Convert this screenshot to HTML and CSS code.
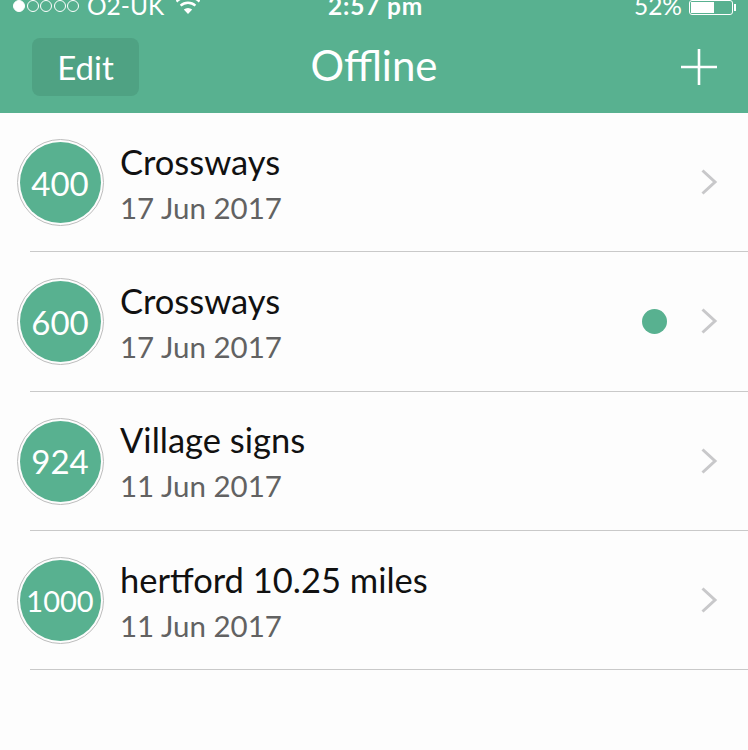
FILE: index.html
```html
<!DOCTYPE html>
<html lang="en">
  <head>
    <meta charset="UTF-8" />
    <meta name="viewport" content="width=device-width, initial-scale=1.0" />
    <title>Offline</title>
    <link rel="stylesheet" href="styles.css">
  </head>
  <body>
    <header class="header">
      <div class="status-bar">
        <div class="status-left">
          <span class="signal">
            <i class="on"></i><i></i><i></i><i></i><i></i>
          </span>
          <span class="carrier">O2-UK</span>
          <svg class="wifi" width="24" height="14" viewBox="0 0 24 14">
            <path d="M0.5 1.5 A17 17 0 0 1 23.5 1.5" fill="none" stroke="#fff" stroke-width="2.4" />
            <path d="M4.6 5.6 A11 11 0 0 1 19.4 5.6" fill="none" stroke="#fff" stroke-width="2.4" />
            <path d="M12 14 L7.8 9.6 A6.2 6.2 0 0 1 16.2 9.6 Z" fill="#fff" />
          </svg>
        </div>
        <div class="status-time">2:57 pm</div>
        <div class="status-right">
          <span class="percent">52%</span>
          <span class="battery"><span class="battery-level"></span></span>
          <span class="battery-tip"></span>
        </div>
      </div>
      <nav class="nav">
        <button class="edit-btn">Edit</button>
        <h1 class="nav-title">Offline</h1>
        <svg class="plus" width="36" height="36" viewBox="0 0 36 36">
          <path d="M18 0 V36 M0 18 H36" stroke="#fff" stroke-width="2.6" />
        </svg>
      </nav>
    </header>

    <main class="list">
      <div class="row">
        <div class="badge"><span class="badge-inner">400</span></div>
        <div class="row-text">
          <div class="row-title">Crossways</div>
          <div class="row-date">17 Jun 2017</div>
        </div>
        <svg class="chevron" width="18" height="28" viewBox="0 0 18 28">
          <path d="M2.5 2.5 L15 14 L2.5 25.5" fill="none" stroke="#c8c8ca" stroke-width="3" />
        </svg>
      </div>
      <div class="row">
        <div class="badge"><span class="badge-inner">600</span></div>
        <div class="row-text">
          <div class="row-title">Crossways</div>
          <div class="row-date">17 Jun 2017</div>
        </div>
        <span class="dot"></span>
        <svg class="chevron" width="18" height="28" viewBox="0 0 18 28">
          <path d="M2.5 2.5 L15 14 L2.5 25.5" fill="none" stroke="#c8c8ca" stroke-width="3" />
        </svg>
      </div>
      <div class="row">
        <div class="badge"><span class="badge-inner">924</span></div>
        <div class="row-text">
          <div class="row-title">Village signs</div>
          <div class="row-date">11 Jun 2017</div>
        </div>
        <svg class="chevron" width="18" height="28" viewBox="0 0 18 28">
          <path d="M2.5 2.5 L15 14 L2.5 25.5" fill="none" stroke="#c8c8ca" stroke-width="3" />
        </svg>
      </div>
      <div class="row">
        <div class="badge"><span class="badge-inner badge-small">1000</span></div>
        <div class="row-text">
          <div class="row-title">hertford 10.25 miles</div>
          <div class="row-date">11 Jun 2017</div>
        </div>
        <svg class="chevron" width="18" height="28" viewBox="0 0 18 28">
          <path d="M2.5 2.5 L15 14 L2.5 25.5" fill="none" stroke="#c8c8ca" stroke-width="3" />
        </svg>
      </div>
    </main>
  </body>
</html>
```

FILE: styles.css
```css
html,
body {
  margin: 0;
  padding: 0;
}

body {
  width: 748px;
  height: 750px;
  overflow: hidden;
  background: #fdfdfd;
  font-family: "Lato", "Open Sans", sans-serif;
  color: #111;
}

.header {
  height: 113px;
  background: #58b190;
  color: #fff;
}

.status-bar {
  display: grid;
  grid-template-columns: 1fr auto 1fr;
  align-items: start;
  height: 17px;
  padding: 0 12px 0 13px;
  font-size: 24.5px;
  line-height: 11px;
}

.status-left {
  display: flex;
  align-items: flex-start;
}

.signal {
  display: flex;
  gap: 1.5px;
  margin-right: 8px;
}

.signal i {
  width: 12px;
  height: 12px;
  border: 1px solid #fff;
  border-radius: 50%;
  box-sizing: border-box;
}

.signal i.on {
  background: #fff;
}

.wifi {
  margin-left: 12px;
}

.status-time {
  font-weight: 700;
  letter-spacing: 0.8px;
  margin-left: 2px;
}

.status-right {
  display: flex;
  justify-content: flex-end;
  align-items: flex-start;
}

.percent {
  margin-right: 7px;
}

.battery {
  display: block;
  width: 44px;
  height: 15px;
  border: 1px solid #fff;
  border-radius: 3px;
  padding: 1px;
  box-sizing: border-box;
}

.battery-level {
  display: block;
  width: 23px;
  height: 100%;
  background: #fff;
}

.battery-tip {
  width: 2px;
  height: 7px;
  margin: 4px 0 0 1px;
  background: #fff;
}

.nav {
  display: grid;
  grid-template-columns: 1fr auto 1fr;
  align-items: center;
  height: 96px;
  padding: 0 32px;
  box-sizing: border-box;
}

.edit-btn {
  justify-self: start;
  width: 107px;
  height: 58px;
  margin-top: 4px;
  border: none;
  border-radius: 8px;
  background: #4fa283;
  color: #fff;
  font-family: inherit;
  font-size: 33px;
  padding: 0;
}

.nav-title {
  margin: 0;
  font-size: 42px;
  font-weight: 400;
}

.plus {
  justify-self: end;
  margin-top: 4px;
  margin-right: -1px;
}

.row {
  position: relative;
  display: flex;
  align-items: center;
  height: 139.33px;
  padding: 0 30px 0 16.5px;
  box-sizing: border-box;
}

.row::after {
  content: "";
  position: absolute;
  left: 30px;
  right: 0;
  bottom: 0;
  height: 1px;
  background: #c9c9c9;
}

.badge {
  flex: none;
  width: 87px;
  height: 87px;
  margin-right: 16.5px;
  padding: 2px;
  border: 1px solid #bdbdbd;
  border-radius: 50%;
  box-sizing: border-box;
}

.badge-inner {
  display: flex;
  justify-content: center;
  align-items: center;
  width: 100%;
  height: 100%;
  border-radius: 50%;
  background: #58b190;
  color: #fff;
  font-size: 33px;
}

.badge-small {
  font-size: 29px;
}

.row-text {
  flex: 1;
  margin-top: 4px;
}

.row-title {
  font-size: 34.5px;
  line-height: 46px;
  color: #111;
}

.row-date {
  font-size: 29.5px;
  line-height: 46px;
  color: #626262;
}

.dot {
  width: 25px;
  height: 25px;
  margin-right: 33px;
  border-radius: 50%;
  background: #58b190;
}

.chevron {
  flex: none;
  margin-top: -1px;
}
```
